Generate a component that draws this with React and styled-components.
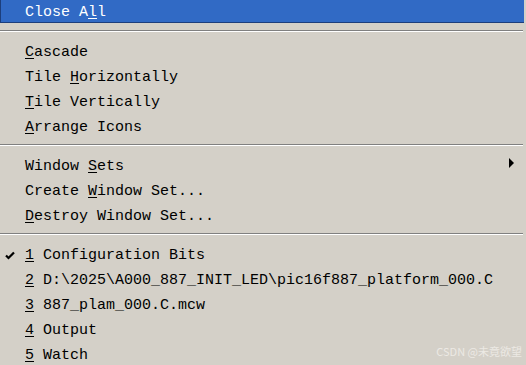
import React from "react";
import styled, { createGlobalStyle } from "styled-components";

const GlobalStyle = createGlobalStyle`
  html, body {
    margin: 0;
    padding: 0;
    background: #d4d0c8;
    overflow: hidden;
  }
`;

const groups = [
  [{ pre: "Close A", key: "l", post: "l", active: true }],
  [
    { pre: "", key: "C", post: "ascade" },
    { pre: "Tile ", key: "H", post: "orizontally" },
    { pre: "", key: "T", post: "ile Vertically" },
    { pre: "", key: "A", post: "rrange Icons" },
  ],
  [
    { pre: "Window ", key: "S", post: "ets", submenu: true },
    { pre: "Create ", key: "W", post: "indow Set..." },
    { pre: "", key: "D", post: "estroy Window Set..." },
  ],
  [
    { pre: "", key: "1", post: " Configuration Bits", checked: true },
    { pre: "", key: "2", post: " D:\\2025\\A000_887_INIT_LED\\pic16f887_platform_000.C" },
    { pre: "", key: "3", post: " 887_plam_000.C.mcw" },
    { pre: "", key: "4", post: " Output" },
    { pre: "", key: "5", post: " Watch" },
  ],
];

export default function App() {
  return (
    <>
      <GlobalStyle />
      <Menu>
        {groups.map((g, gi) => (
          <React.Fragment key={gi}>
            {gi > 0 && <Separator />}
            {g.map((item, i) => (
              <Row key={i}>
                <Item $active={item.active}>
                  <Check>
                    {item.checked && (
                      <svg width="10" height="9" viewBox="0 0 10 9">
                        <path d="M1 4.5 L3.5 7 L9 1.5" stroke="#000" strokeWidth="2.2" fill="none" />
                      </svg>
                    )}
                  </Check>
                  <Label>
                    {item.pre}
                    <u>{item.key}</u>
                    {item.post}
                  </Label>
                  {item.submenu && <Arrow />}
                </Item>
              </Row>
            ))}
          </React.Fragment>
        ))}
      </Menu>
      <Watermark>CSDN @未竟欲望</Watermark>
    </>
  );
}

const Menu = styled.div`
  width: 524px;
  display: flex;
  flex-direction: column;
  font-family: "Liberation Mono", "Noto Sans CJK SC", monospace;
  font-size: 15px;
  color: #000;
`;

const Row = styled.div`
  height: 25px;
`;

const Item = styled.div`
  height: ${(p) => (p.$active ? "23px" : "25px")};
  box-sizing: border-box;
  display: flex;
  align-items: center;
  padding-top: ${(p) => (p.$active ? "3px" : "2px")};
  background: ${(p) => (p.$active ? "#316ac5" : "transparent")};
  color: ${(p) => (p.$active ? "#fff" : "#000")};
  border-left: 1px solid ${(p) => (p.$active ? "#1c3e7c" : "transparent")};
  border-bottom: ${(p) => (p.$active ? "1px solid #1c3e7c" : "none")};

  u {
    text-underline-offset: 2px;
  }
`;

const Check = styled.span`
  width: 24px;
  padding-left: 4px;
  box-sizing: border-box;
  display: flex;
  align-items: center;
`;

const Label = styled.span`
  flex: 1;
  white-space: pre;
`;

const Arrow = styled.span`
  width: 0;
  height: 0;
  margin-right: 10px;
  margin-bottom: 8px;
  border-left: 5px solid #000;
  border-top: 5px solid transparent;
  border-bottom: 5px solid transparent;
`;

const Separator = styled.div`
  height: 14px;
  box-sizing: border-box;
  padding-top: 5px;

  &::before {
    content: "";
    display: block;
    width: 523px;
    height: 1px;
    background: #808080;
    border-bottom: 1px solid #fff;
  }
`;

const Watermark = styled.div`
  position: absolute;
  right: 4px;
  bottom: 6px;
  font-family: "Noto Sans CJK SC", sans-serif;
  font-size: 11px;
  color: #ece9e4;
`;
